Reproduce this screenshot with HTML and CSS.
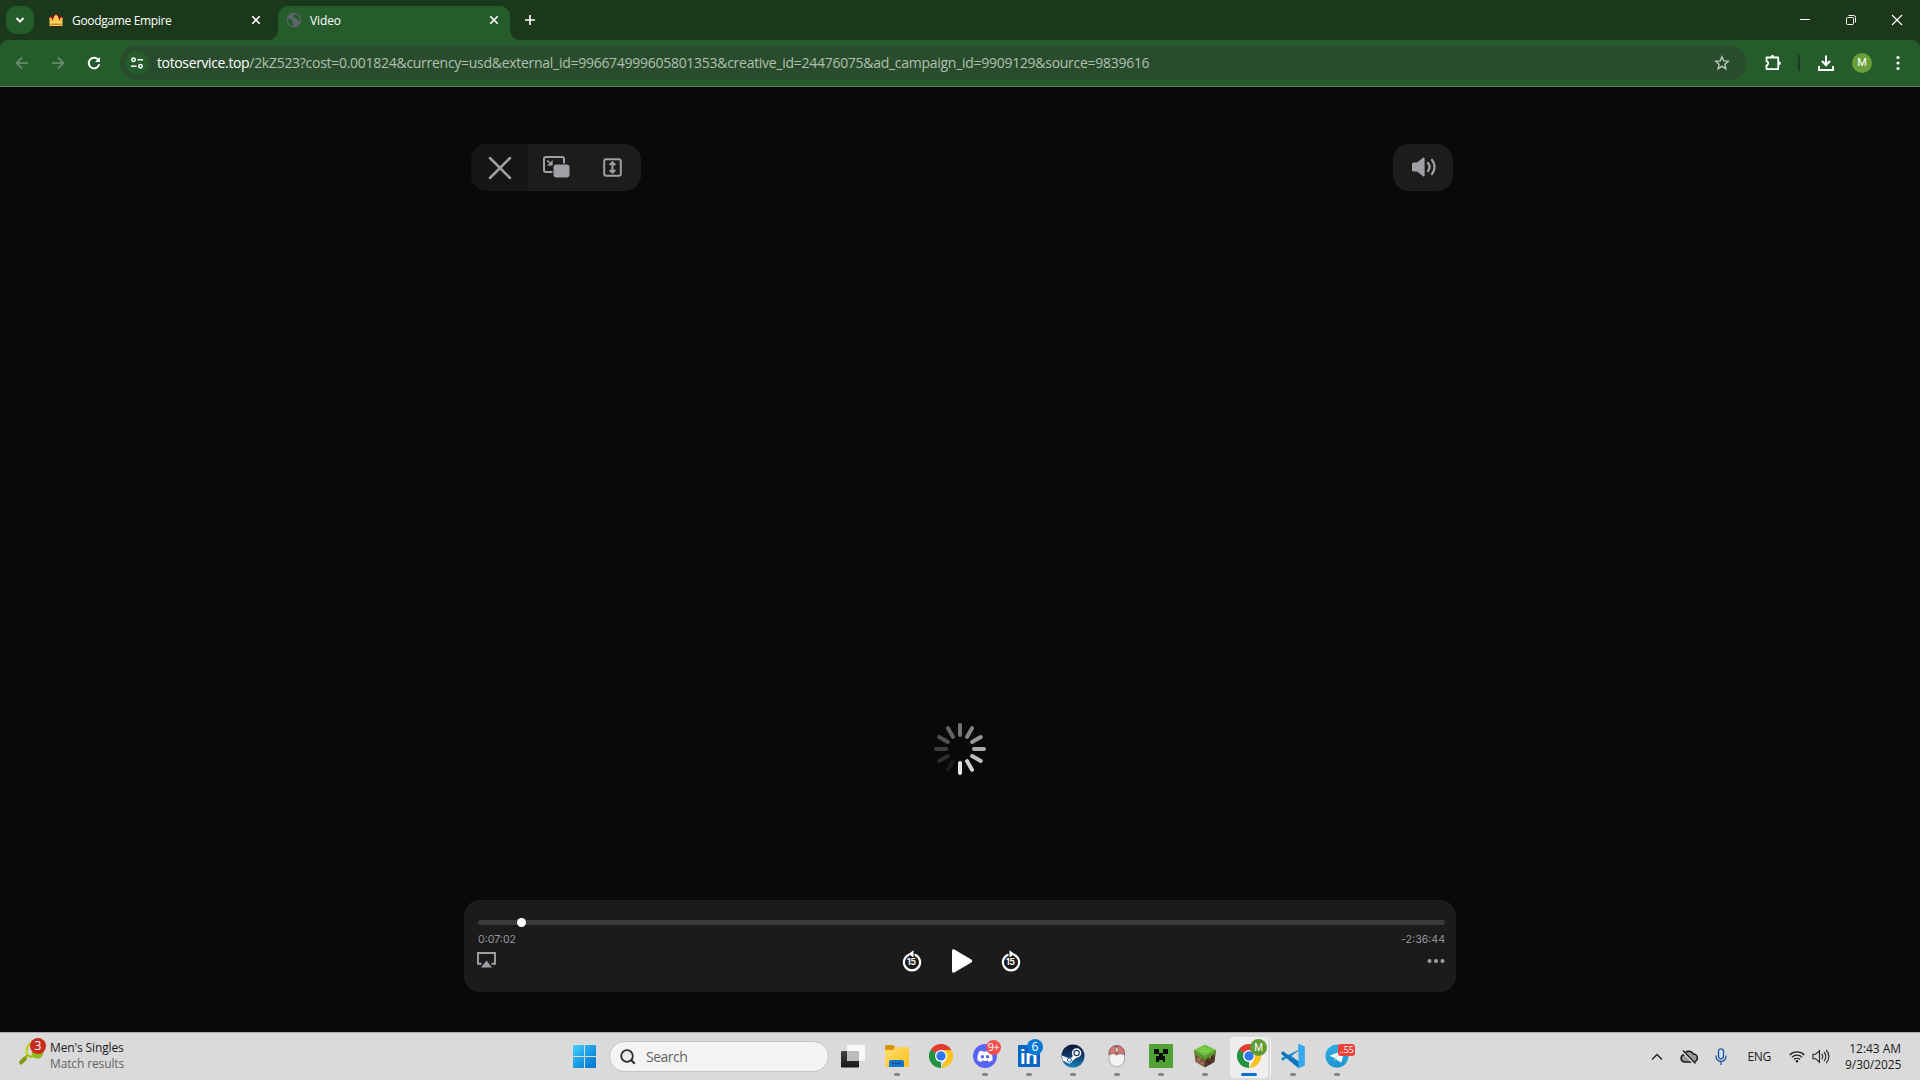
FILE: index.html
```html
<!DOCTYPE html>
<html lang="en">
<head>
<meta charset="utf-8">
<title>Video</title>
<link rel="stylesheet" href="styles.css">
</head>
<body>
<svg width="0" height="0" class="defs" aria-hidden="true">
  <defs>
    <linearGradient id="win" x1="0" y1="0" x2="1" y2="1"><stop offset="0" stop-color="#4fd0fb"/><stop offset=".5" stop-color="#189de6"/><stop offset="1" stop-color="#0672d0"/></linearGradient>
    <linearGradient id="tvDark" x1="0" y1="0" x2="0" y2="1"><stop offset="0" stop-color="#444"/><stop offset="1" stop-color="#161616"/></linearGradient>
    <linearGradient id="folder" x1="0" y1="0" x2="1" y2="1"><stop offset="0" stop-color="#ffdf70"/><stop offset="1" stop-color="#fdbf1e"/></linearGradient>
    <linearGradient id="steam" x1="0" y1="0" x2="0" y2="1"><stop offset="0" stop-color="#0c1633"/><stop offset=".5" stop-color="#123a6b"/><stop offset="1" stop-color="#1586bd"/></linearGradient>
    <linearGradient id="tele" x1="0" y1="0" x2="0" y2="1"><stop offset="0" stop-color="#2faee3"/><stop offset="1" stop-color="#1e93d2"/></linearGradient>
    <symbol id="chrome" viewBox="0 0 24 24">
      <path fill="#e33b2e" d="M12 12 1.600 6A12 12 0 0 1 22.400 6Z"/>
      <path fill="#229342" d="M12 12v12A12 12 0 0 1 1.600 6Z"/>
      <path fill="#e33b2e" d="M12 6h10.400L17 12h-5Z"/>
      <path fill="#229342" d="M1.600 6 6.800 15 12 18V12Z"/>
      <path fill="#fcc31e" d="m17.200 15-5.200 9a12 12 0 0 0 10.400-18H12Z"/>
      <circle cx="12" cy="12" r="6" fill="#fff"/><circle cx="12" cy="12" r="4.700" fill="#2f78ee"/>
    </symbol>
    <symbol id="skip" viewBox="0 0 20 22">
      <path d="M6.600 4.900A8.100 8.100 0 1 0 13.400 4.900" fill="none" stroke="#fff" stroke-width="2.200" stroke-linecap="round"/>
    </symbol>
  </defs>
</svg>

<header class="tabstrip">
  <div class="tab-search"><svg width="12" height="12" viewBox="0 0 12 12"><path d="m2.500 4 3.500 3.600L9.500 4" class="ln w2"/></svg></div>
  <div class="tab">
    <svg class="fav" width="16" height="16" viewBox="0 0 16 16"><path d="M1 5.500 3 3.500h3L8 1l2 2.500h3l2 2-1 5H2Z" fill="#7d1418"/><path d="M1 6.500C2 5 4 5 4.800 9H1.800ZM15 6.500C14 5 12 5 11.200 9h3Z" fill="#f4bf4a"/><path d="M5 9c0-3 1-5 3-6.500C10 4 11 6 11 9Z" fill="#fdc95a"/><path d="M1.500 9h13v5h-13Z" fill="#ffd45e"/><path d="M2 11.700h12v1H2Z" fill="#a8641a"/><path d="M2 14.500h12" stroke="#3a1510"/></svg>
    <span class="tab-title t1">Goodgame Empire</span>
    <svg class="x" width="10" height="10" viewBox="0 0 10 10"><path d="m1.300 1.300 7.400 7.400m0-7.400-7.400 7.400" class="ln"/></svg>
  </div>
  <div class="tab active">
    <svg class="fav" width="16" height="16" viewBox="0 0 16 16"><circle cx="8" cy="8" r="7.300" fill="#5e646b"/><path d="M2 5.500C3.500 8 6 7 7 8.500S5 10 6.500 11.500 7 14 6 14C3.500 13.500 1.500 11 2 5.500ZM8 2.200c1 1-1.500 1.500-1 2.800s2.500.5 3.500 1.500S12 9 13.800 9C14.500 5 12 2 8 2.200Z" fill="#265c2b"/></svg>
    <span class="tab-title t2">Video</span>
    <svg class="x" width="10" height="10" viewBox="0 0 10 10"><path d="m1.300 1.300 7.400 7.400m0-7.400-7.400 7.400" class="ln"/></svg>
  </div>
  <svg class="plus" width="12" height="12" viewBox="0 0 12 12"><path d="M6 1v10M1 6h10" class="ln"/></svg>
  <div class="winctl">
    <svg width="12" height="12" viewBox="0 0 12 12"><path d="M1 5.500h10" stroke="#fff"/></svg>
    <svg width="12" height="12" viewBox="0 0 12 12" fill="none" stroke="#fff"><rect x="1.500" y="3.500" width="7" height="7" rx="1"/><path d="M3.500 1.500h5a2 2 0 0 1 2 2v5"/></svg>
    <svg width="12" height="12" viewBox="0 0 12 12"><path d="m1 1 10 10M11 1 1 11" stroke="#fff" stroke-width="1.200"/></svg>
  </div>
</header>

<div class="toolbar">
  <nav class="nav">
    <svg width="16" height="16" viewBox="0 0 16 16" class="dim"><path d="M14 8H3m5-5.500L2.600 8 8 13.500" fill="none" stroke="currentColor" stroke-width="1.600"/></svg>
    <svg width="16" height="16" viewBox="0 0 16 16" class="dim"><path d="M2 8h11M8 2.500 13.400 8 8 13.500" fill="none" stroke="currentColor" stroke-width="1.600"/></svg>
    <svg width="16" height="16" viewBox="0 0 16 16"><path d="M13.200 9.300A5.300 5.300 0 1 1 12 4.500l1 1.200" class="ln w2"/><path d="M14 2v5H9Z" fill="#fff"/></svg>
  </nav>
  <div class="omnibox">
    <div class="site"><svg width="14" height="14" viewBox="0 0 14 14" fill="none" stroke="#fff" stroke-width="1.500"><circle cx="3.500" cy="3.700" r="1.700"/><path d="M7.500 3.700H13M1 10.300h5.500"/><circle cx="10.500" cy="10.300" r="1.700"/></svg></div>
    <div class="url"><b>totoservice.top</b><span>/2kZ523?cost=0.001824&amp;currency=usd&amp;external_id=996674999605801353&amp;creative_id=24476075&amp;ad_campaign_id=9909129&amp;source=9839616</span></div>
    <svg class="star" width="16" height="16" viewBox="0 0 16 16"><path d="m8 1.800 1.800 4.100 4.500.4-3.400 3 1 4.400L8 11.400l-3.900 2.300 1-4.400-3.400-3 4.500-.4Z" fill="none" stroke="#b9c9ba" stroke-width="1.400"/></svg>
  </div>
  <div class="actions">
    <svg width="18" height="18" viewBox="0 0 18 18"><path d="M2.500 3.500h11.700v11.700H2.500v-3.700a2.200 2.200 0 0 0 0-4.300Z" fill="none" stroke="#fff" stroke-width="1.800" stroke-linejoin="round"/><path d="M6.500 3a2 2 0 0 1 4 0ZM14.800 7.300a2 2 0 0 1 0 4Z" fill="#fff"/></svg>
    <i class="sep"></i>
    <svg class="dl" width="18" height="18" viewBox="0 0 18 18"><path d="M9 1.500v9M5 7l4 4.200L13 7M2 12v4h14v-4" fill="none" stroke="#fff" stroke-width="2"/></svg>
    <span class="avatar">M</span>
    <svg class="kebab" width="4" height="16" viewBox="0 0 4 16" fill="#fff"><circle cx="2" cy="2.500" r="1.600"/><circle cx="2" cy="8" r="1.600"/><circle cx="2" cy="13.500" r="1.600"/></svg>
  </div>
</div>

<main class="player">
  <div class="top">
    <div class="group">
      <div class="btn close"><svg width="24" height="24" viewBox="0 0 24 24"><path d="m2 2 20 20M22 2 2 22" stroke="#a09fa5" stroke-width="2.500" stroke-linecap="round"/></svg></div>
      <div class="btn pip"><svg width="27" height="22" viewBox="0 0 27 22"><rect x="1" y="1" width="20" height="15" rx="2" fill="none" stroke="#a09fa5" stroke-width="2"/><rect x="9.500" y="7.500" width="17.500" height="14.500" rx="3.500" fill="#1c1c1c"/><rect x="10.500" y="8.500" width="16" height="13" rx="3" fill="#a09fa5"/><path d="m4.500 4 2.700 2.700L9.300 4.500v4.800H4.500l1.900-1.800L4 5Z" fill="#a09fa5" stroke="#a09fa5" stroke-width=".6"/></svg></div>
      <div class="btn fit"><svg width="19" height="19" viewBox="0 0 19 19" fill="none" stroke="#a09fa5" stroke-width="2"><rect x="1.200" y="1.200" width="16.600" height="16.600" rx="2"/><path d="M9.500 4.500v10M6.700 7l2.800-2.700L12.300 7M6.700 12l2.800 2.700 2.800-2.700"/></svg></div>
    </div>
    <div class="vol"><svg width="26" height="20" viewBox="0 0 26 20"><path d="M1 7a1.500 1.500 0 0 1 1.500-1.500H6L12 .7c.8-.5 1.600 0 1.600.8v17c0 .8-.8 1.300-1.600.8L6 14.500H2.500A1.500 1.500 0 0 1 1 13Z" fill="#a09fa5"/><path d="M17 6a6.500 6.500 0 0 1 0 8M21 3a11 11 0 0 1 0 14" fill="none" stroke="#a09fa5" stroke-width="2.300" stroke-linecap="round"/></svg></div>
  </div>
  <svg class="spinner" width="54" height="54" viewBox="-27 -27 54 54" stroke-width="4" stroke-linecap="round">
    <path d="M0-24v10" stroke="#757575"/>
    <path d="M0-24v10" stroke="#848484" transform="rotate(30)"/>
    <path d="M0-24v10" stroke="#989898" transform="rotate(60)"/>
    <path d="M0-24v10" stroke="#ababab" transform="rotate(90)"/>
    <path d="M0-24v10" stroke="#bebebe" transform="rotate(120)"/>
    <path d="M0-24v10" stroke="#d2d2d2" transform="rotate(150)"/>
    <path d="M0-24v10" stroke="#e6e6e6" transform="rotate(180)"/>
    <path d="M0-24v10" stroke="#1b1b1b" transform="rotate(210)"/>
    <path d="M0-24v10" stroke="#2d2d2d" transform="rotate(240)"/>
    <path d="M0-24v10" stroke="#3f3f3f" transform="rotate(270)"/>
    <path d="M0-24v10" stroke="#515151" transform="rotate(300)"/>
    <path d="M0-24v10" stroke="#636363" transform="rotate(330)"/>
  </svg>
  <div class="controls">
    <div class="track"><i class="thumb"></i></div>
    <div class="times"><span>0:07:02</span><span>-2:36:44</span></div>
    <div class="buttons">
      <svg class="air" width="19" height="16" viewBox="0 0 19 16"><path d="M4.500 11.800H1V1h17v10.800h-3.500" fill="none" stroke="#a09fa5" stroke-width="1.900"/><path d="m9.500 8.500 5.500 7H4Z" fill="#a09fa5"/></svg>
      <div class="transport">
        <div class="skip"><svg width="20" height="22" viewBox="0 0 20 22"><use href="#skip"/><path d="m11.500.3-5 3.600 5 3.600Z" fill="#fff"/></svg><b>15</b></div>
        <svg class="play" width="22" height="26" viewBox="0 0 22 26"><path d="M1 2.700C1 1.300 2.200.8 3.300 1.400l17 10c1.200.8 1.200 2.200 0 3l-17 10C2.200 25 1 24.500 1 23.100Z" fill="#fff"/></svg>
        <div class="skip"><svg width="20" height="22" viewBox="0 0 20 22"><use href="#skip"/><path d="m8.500.3 5 3.600-5 3.600Z" fill="#fff"/></svg><b>15</b></div>
      </div>
      <svg class="more" width="18" height="6" viewBox="0 0 18 6" fill="#a09fa5"><circle cx="2.500" cy="3" r="2"/><circle cx="9" cy="3" r="2"/><circle cx="15.500" cy="3" r="2"/></svg>
    </div>
  </div>
</main>

<footer class="taskbar">
  <div class="widget">
    <div class="racket"><svg width="26" height="30" viewBox="0 0 26 30"><path d="M9 18C7 12 11 5 17 4s8 6 4 11-9 5-12 3Z" fill="none" stroke="#bdd01a" stroke-width="2.200"/><path d="m2.500 25.500 7-7.500 3 2 4-1" fill="none" stroke="#a9bc16" stroke-width="2"/><path d="m3 25.500 4-4" stroke="#8a9a10" stroke-width="4" stroke-linecap="round"/><circle cx="19.500" cy="16" r="5.800" fill="#8fb81d"/><path d="M14 14c3 3 8 2 11 0" fill="none" stroke="#d8e88b"/></svg><span class="badge red">3</span></div>
    <div class="news"><div class="n1">Men's Singles</div><div class="n2">Match results</div></div>
  </div>
  <div class="apps">
    <div class="slot"><svg width="23" height="23" viewBox="0 0 23 23"><path fill="url(#win)" d="M1 0h10v11H0V1a1 1 0 0 1 1-1ZM12 0h10a1 1 0 0 1 1 1v10H12ZM0 12h11v11H1a1 1 0 0 1-1-1ZM12 12h11v10a1 1 0 0 1-1 1H12Z"/></svg></div>
    <div class="search"><svg width="16" height="16" viewBox="0 0 16 16"><circle cx="7" cy="7" r="5.800" fill="#e9ebed" stroke="#2b2b2b" stroke-width="1.800"/><path d="m11.300 11.300 3.500 3.500" stroke="#2b2b2b" stroke-width="2"/></svg><span>Search</span></div>
    <div class="slot"><svg width="24" height="23" viewBox="0 0 24 23"><rect y="6" width="18" height="16.500" rx="1" fill="url(#tvDark)"/><rect x="6" width="18" height="16" rx="1" fill="#f8f8f8"/><path d="M6 6h12v10H6Z" fill="#bcbcbc"/></svg></div>
    <div class="slot run"><svg width="24" height="22" viewBox="0 0 24 22"><path d="M0 1.500A1.500 1.500 0 0 1 1.500 0H8l2 2v4H0Z" fill="#d8970a"/><path d="M0 5h8l2.500-3H23a1 1 0 0 1 1 1v18a1 1 0 0 1-1 1H1a1 1 0 0 1-1-1Z" fill="url(#folder)"/><path d="M4 22v-5a2 2 0 0 1 2-2h11a2 2 0 0 1 2 2v5Z" fill="#1277c9"/><path d="M7 18.500h9" stroke="#0b569d" stroke-width="1.500"/></svg></div>
    <div class="slot"><svg width="24" height="24"><use href="#chrome"/></svg></div>
    <div class="slot run"><svg width="24" height="24" viewBox="0 0 24 24"><circle cx="12" cy="12" r="12" fill="#5865f2"/><path d="M8.700 6.500 6.500 7.300C4.800 10 4.200 13 4.500 16.300c1.500 1 2.600 1.400 3.700 1.700l1-1.500c2 .5 3.600.5 5.600 0l1 1.500c1.200-.3 2.400-.8 3.700-1.700.3-3.300-.4-6.300-2-9l-2.200-.8-.8 1.100h-5Z" fill="#fff"/><circle cx="9.400" cy="12.800" r="1.700" fill="#5865f2"/><circle cx="14.600" cy="12.800" r="1.700" fill="#5865f2"/></svg><span class="badge coral">9+</span></div>
    <div class="slot run"><span class="linkedin">in</span><span class="badge blue">6</span></div>
    <div class="slot run"><svg width="24" height="24" viewBox="0 0 24 24"><circle cx="12" cy="12" r="11.500" fill="url(#steam)"/><path d="m1 11.500 8 3.300 5-4.500 2 3-4.500 3.500A3.700 3.700 0 0 1 5 18l-3.300-1.500Z" fill="#fff"/><circle cx="15.600" cy="9" r="4" fill="#173a66" stroke="#fff" stroke-width="1.500"/><circle cx="15.600" cy="9" r="2.100" fill="#fff"/><circle cx="8.400" cy="16" r="2" fill="#fff" stroke="#17609b"/></svg></div>
    <div class="slot run"><svg width="24" height="24" viewBox="0 0 24 24"><rect x="4" y="1.500" width="15.500" height="21" rx="7.500" fill="#f5f3f2" stroke="#aaa"/><path d="M4 11V9a7.500 7.500 0 0 1 7.500-7.500h.5A7.500 7.500 0 0 1 19.500 9v2c-1.500-1-3-1.300-4.500-1.500L11.800 11 8.500 9.500C7 9.700 5.500 10 4 11Z" fill="#cf7775" stroke="#81504f" stroke-width=".7"/><path d="M11.800 2v8" stroke="#773f3f"/><rect x="10.600" y="3.500" width="2.400" height="4.500" rx="1.200" fill="#ddd" stroke="#666" stroke-width=".5"/></svg></div>
    <div class="slot run"><svg width="24" height="24" viewBox="0 0 24 24" shape-rendering="crispEdges"><path fill="#50a332" d="M0 0h24v24H0Z"/><path fill="#0a0d09" d="M5 5h5v5H5ZM14 5h5v5h-5ZM10 9h4v3h2v6h-2v-2h-4v2H7v-6h3Z"/></svg></div>
    <div class="slot run"><svg width="24" height="24" viewBox="0 0 24 24"><path d="m12 .5 11 5.500-11 6L1 6Z" fill="#6fc43d"/><path d="m1 6 11 6v11.500L2.500 18Z" fill="#805841"/><path d="M23 6 12 12v11.500l9.500-5.500Z" fill="#563729"/><path d="m1 6 11 6v4l-2-1v-1l-2-1v2l-2-1v-2l-2-1-2.300-1ZM23 6 12 12v4l2-1v-1l2-1v2l2-1v-2l2-1 2.300-1Z" fill="#559a2c"/><path d="m8 4 2 1 2-1 2 1M6 7l3-1 2 2 3-2 3 1" stroke="#86db50" fill="none"/><path d="m5 15 2 1m1 3 2 1m-6-2 2 1" stroke="#b08466" stroke-width="1.500"/><path d="m14 18 2-1m2-2 2-1m-4 6 2-1" stroke="#3a251c" stroke-width="1.500"/></svg></div>
    <div class="slot run current"><svg width="24" height="24"><use href="#chrome"/></svg><span class="badge green">M</span></div>
    <div class="slot run"><svg width="24" height="24" viewBox="0 0 24 24"><path d="m17.500 0 6 2.500v19l-6 2.500L6 13.500 2 16.800.3 15.500V14L17.500 6Z" fill="#1f8ad2"/><path d="M.3 8.500 2 7.200l15.500 11V24L.3 10Z" fill="#0f73ba"/><path d="m17.500 0 6 2.500v19l-6 2.500Z" fill="#35a9ef"/><path d="M17.500 6.800v10.400L10.500 12Z" fill="#dadada"/></svg></div>
    <div class="slot run"><svg width="24" height="24" viewBox="0 0 24 24"><circle cx="12" cy="12" r="11.500" fill="url(#tele)"/><path d="M4.500 11.800 18 6.500c.7-.2 1.100.2.900 1l-2.200 10c-.2.800-.8 1-1.400.6L9 13.700Z" fill="#fff"/><path d="m9 13.700 6.500-4.500-5 5.300-.5 3Z" fill="#b9daed"/></svg><span class="badge tg">..55</span></div>
  </div>
  <div class="tray">
    <svg class="chev" width="12" height="8" viewBox="0 0 12 8"><path d="m1 6.500 5-5 5 5" fill="none" stroke="#222" stroke-width="1.400"/></svg>
    <svg class="cloud" width="18" height="16" viewBox="0 0 18 16"><path d="M4.500 13A3.700 3.700 0 0 1 4 5.700 5 5 0 0 1 13.200 5 4 4 0 0 1 13.500 13Z" fill="#999" stroke="#191919" stroke-width="1.500"/><path d="m2.500 2 12.500 13" stroke="#dadada" stroke-width="3"/><path d="m3 1.500 12.500 13" stroke="#191919" stroke-width="1.300"/></svg>
    <svg class="mic" width="12" height="17" viewBox="0 0 12 17" fill="none" stroke="#2057a8" stroke-width="1.300"><rect x="3.500" y=".8" width="5" height="10" rx="2.500" fill="#d0dff2"/><path d="M1 7.500V8.500a5 5 0 0 0 10 0V7.500M6 13.500V17"/></svg>
    <span class="lang">ENG</span>
    <svg class="wifi" width="16" height="13" viewBox="0 0 16 13" fill="none" stroke="#222" stroke-width="1.200"><path d="M.7 5a10.300 10.300 0 0 1 14.600 0M2.800 7.300a7.300 7.300 0 0 1 10.400 0M5 9.500a4.300 4.300 0 0 1 6 0"/><circle cx="8" cy="11.300" r="1.200" fill="#222" stroke="none"/></svg>
    <svg class="spk" width="18" height="15" viewBox="0 0 18 15" fill="none" stroke="#222" stroke-width="1.100"><path d="M1 5.300h2.500L7.500 1.800v11.400L3.500 9.700H1ZM9.700 5a3.500 3.500 0 0 1 0 5M12 3a6.500 6.500 0 0 1 0 9M14.200 1a9.300 9.300 0 0 1 0 13"/></svg>
    <div class="clock"><div class="c1">12:43 AM</div><div class="c2">9/30/2025</div></div>
  </div>
</footer>
</body>
</html>
```
FILE: styles.css
```css
* { box-sizing: border-box; }
html, body { margin: 0; height: 100%; overflow: hidden; background: #090909; }
body { display: flex; flex-direction: column; width: 1920px; height: 1080px; font-family: "Open Sans", "Noto Sans", sans-serif; }
svg { display: block; flex: none; }
.defs { position: absolute; }
.ln { fill: none; stroke: #fff; stroke-width: 1.6; }
.w2 { stroke-width: 1.9; }

/* tab strip */
.tabstrip { display: flex; align-items: center; height: 40px; padding-left: 6px; background: #1b381b; color: #fff; flex: none; }
.tab-search { display: grid; place-items: center; width: 28px; height: 28px; border-radius: 10px; background: #265c2b; }
.tab { display: flex; align-items: center; width: 232px; height: 34px; margin-top: 6px; padding: 0 11px 6px 8px; }
.tab:not(.active) { width: 226px; margin-left: 14px; padding-right: 13px; padding-left: 0; margin-right: 4px; }
.tab.active { position: relative; background: #265c2b; border-radius: 10px 10px 0 0; }
.tab.active::before, .tab.active::after { content: ""; position: absolute; bottom: 0; width: 10px; height: 10px; }
.tab.active::before { left: -10px; background: radial-gradient(circle at 0 0, transparent 9.5px, #265c2b 10.5px); }
.tab.active::after { right: -10px; background: radial-gradient(circle at 100% 0, transparent 9.5px, #265c2b 10.5px); }
.tab-title { flex: 1; margin-left: 8px; padding-top: 2px; font-size: 12px; line-height: 16px; white-space: nowrap; }
.t1 { letter-spacing: -.33px; }
.t2 { letter-spacing: -.1px; }
.plus { margin-left: 14px; }
.winctl { display: flex; gap: 34px; margin-left: auto; padding-right: 17px; }

/* toolbar */
.toolbar {
  display: flex; align-items: center; height: 47px; flex: none; padding-left: 14px; color: #fff;
  border-bottom: 1px solid #5c865f;
  background:
    radial-gradient(circle at 8px 8px, #265c2b 7.5px, #1b381b 8.5px) 0 0 / 8px 8px no-repeat,
    radial-gradient(circle at 0 8px, #265c2b 7.5px, #1b381b 8.5px) 100% 0 / 8px 8px no-repeat,
    #265c2b;
}
.nav { display: flex; gap: 20px; width: 106px; }
.dim { color: #6f9472; }
.omnibox { display: flex; align-items: center; width: 1626px; height: 34px; border-radius: 17px; background: #294d2c; padding: 0 16px 0 5px; }
.site { display: grid; place-items: center; width: 24px; height: 24px; border-radius: 50%; background: #265c2b; }
.url { display: flex; flex: 1; margin-left: 8px; font-size: 14px; line-height: 20px; white-space: nowrap; color: #afc0b0; }
.url b { font-weight: 400; color: #fff; letter-spacing: -.37px; }
.url span { letter-spacing: -.28px; }
.actions { display: flex; align-items: center; margin-left: 18px; }
.sep { width: 2px; height: 16px; margin-left: 16px; background: #1b3f1e; }
.dl { margin-left: 17px; }
.avatar { width: 20px; height: 20px; margin-left: 17px; border-radius: 50%; background: #689f38; font: 11px/20px Roboto, sans-serif; text-align: center; }
.kebab { margin-left: 24px; }

/* player */
.player { display: flex; flex-direction: column; align-items: center; flex: 1; padding-top: 56px; background: #090909; border-top: 1px solid #000; }
.top { display: flex; justify-content: space-between; width: 982px; height: 47px; margin-left: 4px; }
.group { display: flex; width: 170px; border-radius: 16px; background: #1c1c1c; overflow: hidden; }
.btn { display: grid; place-items: center; width: 57px; padding-bottom: 1px; }
.close { background: #161616; padding-bottom: 0; }
.pip { width: 56px; }
.vol { display: grid; place-items: center; width: 60px; border-radius: 16px; background: #1c1c1c; padding: 0 0 1px 1px; }
.spinner { margin-top: 531px; }
.controls { width: 992px; height: 92px; margin-top: 124px; padding: 20px 11px 0 14px; border-radius: 16px; background: #1b1b1b; }
.track { position: relative; height: 5px; border-radius: 2.5px; background: #3a3a3b; }
.thumb { position: absolute; left: 39px; top: -2px; width: 9px; height: 9px; border-radius: 50%; background: #fff; }
.times { display: flex; justify-content: space-between; margin-top: 8px; font: 10.6px/14px Inter, Arial, sans-serif; color: #98979c; }
.buttons { display: flex; align-items: center; justify-content: space-between; height: 26px; margin-top: 1px; }
.air { margin: 0 0 2px -1px; }
.transport { display: flex; align-items: center; margin-right: 1px; }
.skip { position: relative; width: 20px; }
.skip b { position: absolute; left: 0; right: 0; top: 7px; font: bold 8.5px/10px Inter, sans-serif; color: #fff; text-align: center; letter-spacing: -.1px; }
.play { margin: 0 28px 0 29px; }

/* taskbar */
.taskbar { display: flex; height: 48px; flex: none; border-top: 1px solid #aaa; background: #dadada; color: #1b1b1b; }
.widget { display: flex; width: 562px; padding: 4px 0 0 18px; }
.racket { position: relative; width: 32px; }
.n1, .n2 { font-size: 12px; line-height: 16px; margin-top: 3px; letter-spacing: -.13px; }
.n2 { margin-top: 0; color: #646464; }
.apps { display: flex; align-items: center; }
.slot { position: relative; display: grid; place-items: center; width: 44px; height: 38px; padding-bottom: 1px; }
.slot > svg, .linkedin { position: relative; }
.run::after { content: ""; position: absolute; left: 19px; bottom: 0; width: 6px; height: 3px; border-radius: 2px; background: #858585; }
.current::before { content: ""; position: absolute; left: 3px; top: -1px; width: 36px; height: 39px; border-radius: 4px; background: #eee; box-shadow: 2px 0 0 #dadada, 3px 0 0 #f4f4f4; border: 1px solid #f3f3f3; }
.current::after { left: 14px; width: 16px; background: #0a70cf; }
.search { display: flex; align-items: center; width: 220px; height: 31px; margin: 0 2px 0 3px; padding-left: 10px; border: 1px solid #c4c4c4; border-radius: 16px; background: #f4f4f4; }
.search span { margin: -1px 0 0 10px; font-size: 14px; letter-spacing: -.5px; color: #636363; }
.linkedin { width: 22px; height: 22px; border-radius: 1px; background: #0a66c2; color: #fff; font: bold 20px/24px "Liberation Sans", Arial, sans-serif; text-align: center; letter-spacing: -.5px; padding-right: 1px; }
.badge { position: absolute; z-index: 1; color: #fff; border-radius: 9px; text-align: center; font-size: 12px; }
.red { left: 12px; top: 1px; width: 16px; height: 16px; line-height: 16px; background: #c92a20; }
.coral { left: 23px; top: 2px; width: 15px; height: 15px; line-height: 14px; font-size: 11px; background: #f0504d; letter-spacing: -.6px; }
.blue { left: 20px; top: 1px; width: 16px; height: 16px; line-height: 16px; background: #0a78d4; }
.green { left: 23px; top: 1px; width: 17px; height: 17px; font: 10px/17px Roboto, sans-serif; background: #619b32; }
.tg { left: 23px; top: 6px; width: 17px; height: 12px; border-radius: 3px; background: #ee3f38; font: 9px/12px "Open Sans", sans-serif; letter-spacing: -.2px; }
.tray { display: flex; align-items: center; margin-left: auto; padding-right: 19px; font-size: 12px; }
.cloud { margin-left: 17px; }
.mic { margin-left: 17px; }
.lang { margin-left: 20px; letter-spacing: -.3px; }
.wifi { margin-left: 18px; }
.spk { margin-left: 7px; }
.clock { margin-left: 15px; text-align: right; line-height: 16px; width: 56px; white-space: nowrap; letter-spacing: -.05px; }
```
